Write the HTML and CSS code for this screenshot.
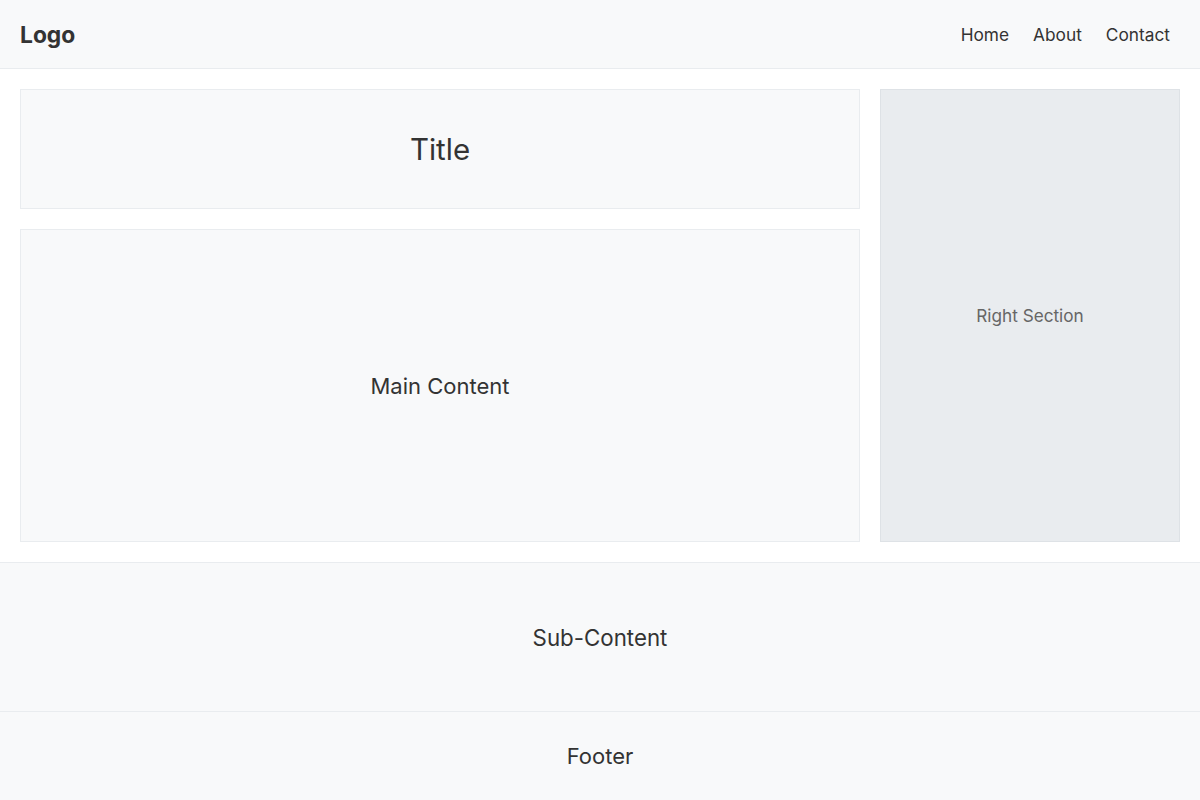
FILE: index.html
```html
<!DOCTYPE html>
<html>
<head>
<meta charset="utf-8">
<link rel="stylesheet" href="styles.css">
</head>
<body>
<header class="header">
  <div class="logo">Logo</div>
  <nav class="nav">
    <a href="#">Home</a>
    <a href="#">About</a>
    <a href="#">Contact</a>
  </nav>
</header>
<main class="main">
  <div class="left">
    <div class="box title-box">Title</div>
    <div class="box content-box">Main Content</div>
  </div>
  <aside class="right">Right Section</aside>
</main>
<section class="sub">Sub-Content</section>
<footer class="footer">Footer</footer>
</body>
</html>
```
FILE: styles.css
```css
* { box-sizing: border-box; }
html, body { margin: 0; padding: 0; }
body {
  font-family: Inter, "Noto Sans", sans-serif;
  color: #333;
  background: #fff;
  width: 1200px;
  height: 800px;
  overflow: hidden;
}
.header {
  height: 69px;
  background: #f8f9fa;
  border-bottom: 1px solid #e9ecef;
  display: flex;
  align-items: center;
  justify-content: space-between;
  padding: 0 30px 0 20px;
}
.logo { font-size: 22.8px; font-weight: 700; }
.nav { display: flex; gap: 24px; }
.nav a { color: #333; text-decoration: none; font-size: 17.3px; }
.main {
  display: flex;
  gap: 20px;
  padding: 20px;
  height: 493px;
}
.left { flex: 1; display: flex; flex-direction: column; gap: 20px; }
.box {
  background: #f8f9fa;
  border: 1px solid #e9ecef;
  display: flex;
  align-items: center;
  justify-content: center;
}
.title-box { height: 120px; font-size: 29.5px; }
.content-box { flex: 1; font-size: 22px; }
.right {
  width: 300px;
  background: #e9ecef;
  border: 1px solid #dee2e6;
  display: flex;
  align-items: center;
  justify-content: center;
  font-size: 17.2px;
  color: #666;
}
.sub {
  height: 149px;
  border-top: 1px solid #e9ecef;
  background: #f8f9fa;
  display: flex;
  align-items: center;
  justify-content: center;
  font-size: 22.3px;
}
.footer {
  height: 89px;
  border-top: 1px solid #e9ecef;
  background: #f8f9fa;
  display: flex;
  align-items: center;
  justify-content: center;
  font-size: 22px;
}
```
